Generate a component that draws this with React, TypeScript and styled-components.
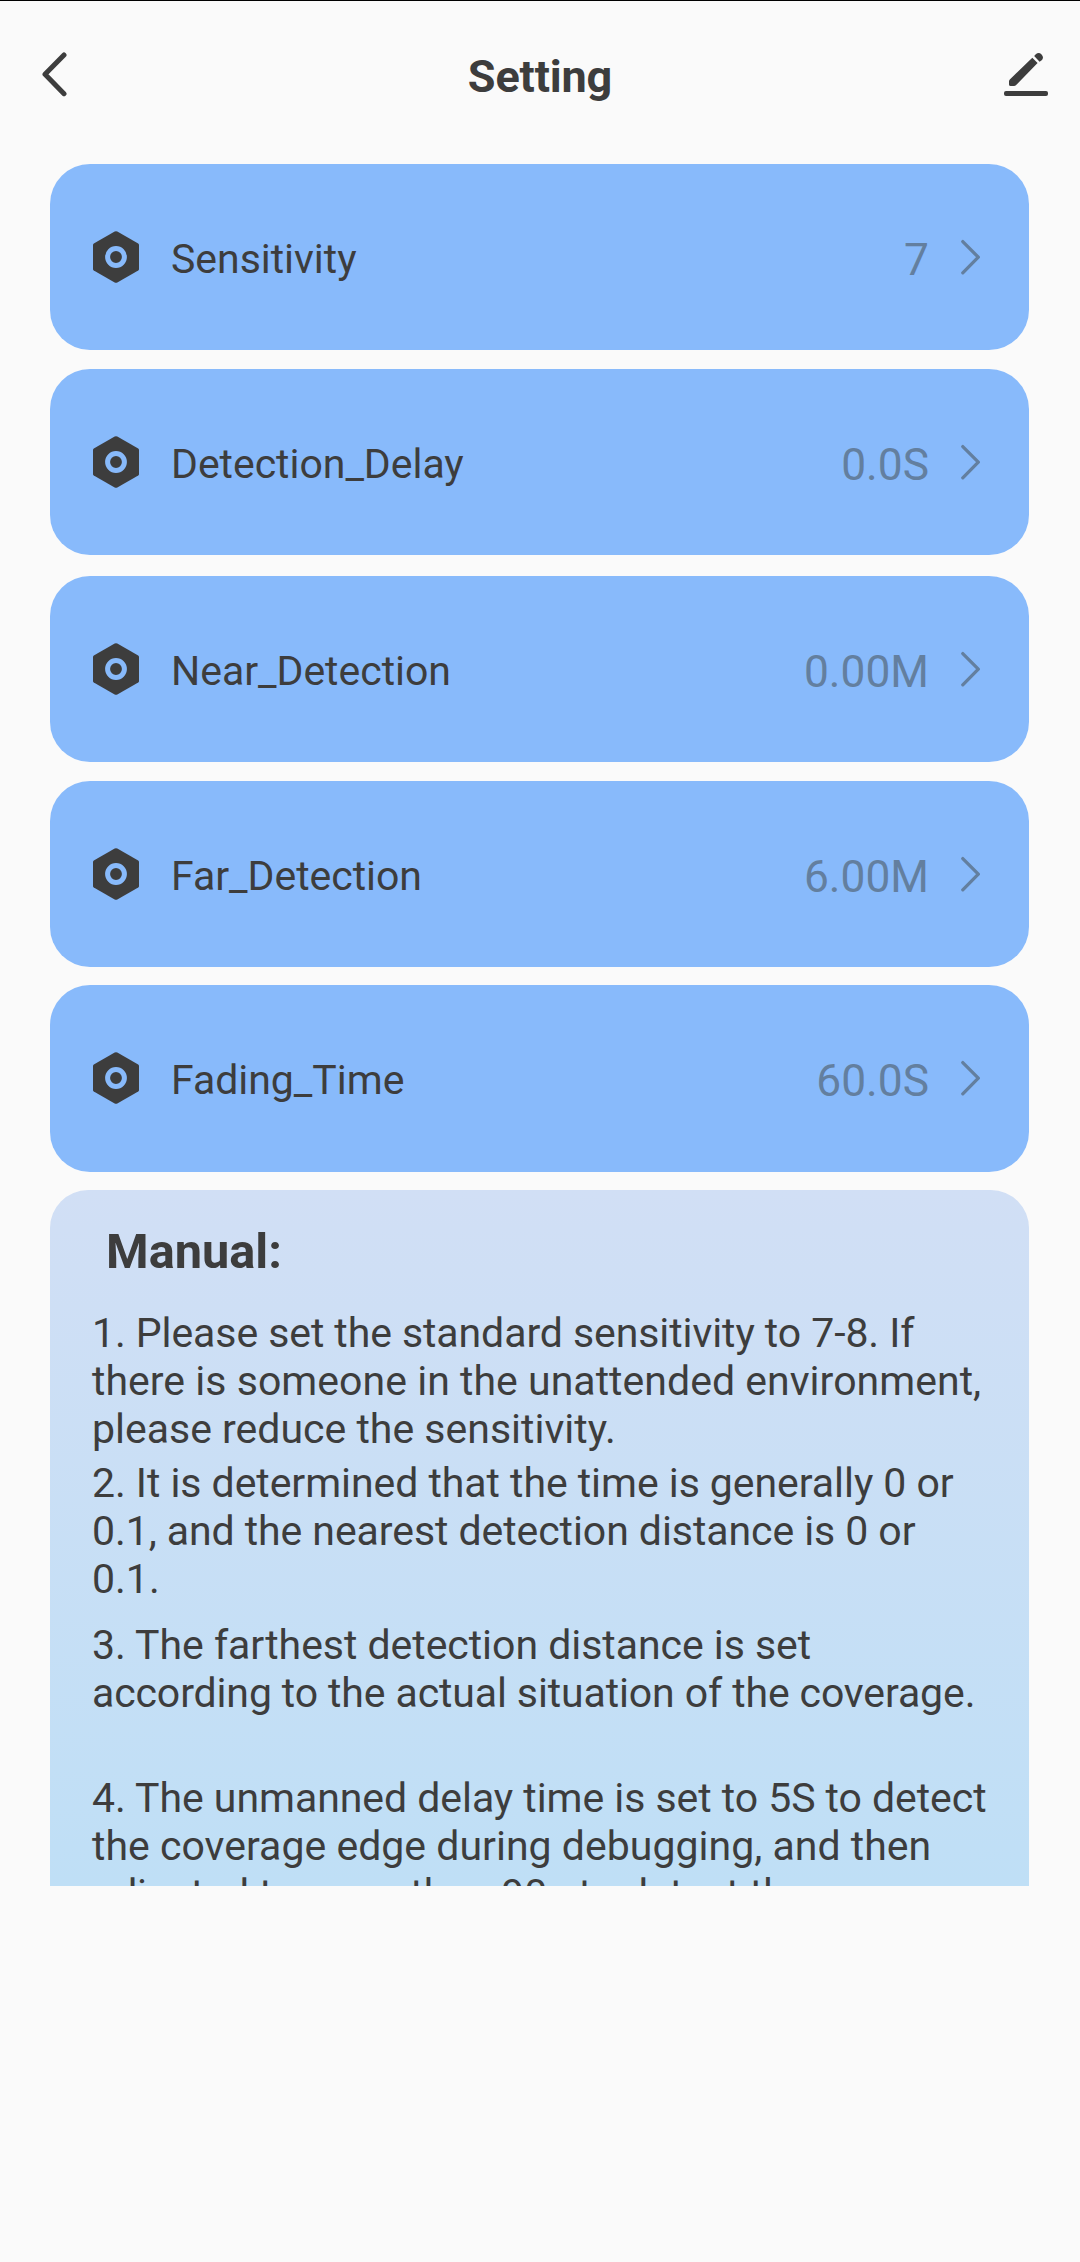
import React from "react";
import styled, { createGlobalStyle } from "styled-components";

const INK = "#3d3d3d";

const GlobalStyle = createGlobalStyle`
  * { box-sizing: border-box; }
  body { margin: 0; background: #fafafa; }
`;

const Screen = styled.div`
  width: 1080px;
  height: 2262px;
  display: flex;
  flex-direction: column;
  overflow: hidden;
  border-top: 1px solid #000;
  background: #fafafa;
  color: ${INK};
  font-family: Roboto, "Liberation Sans", sans-serif;
`;

const Header = styled.header`
  height: 163px;
  flex: none;
  display: grid;
  grid-template-columns: 108px 1fr 108px;
  align-items: start;
`;

const IconButton = styled.button<{ $end?: boolean }>`
  height: 146px;
  padding: ${(p) => (p.$end ? "0 32px 0 0" : "0 0 0 42px")};
  border: 0;
  background: none;
  color: inherit;
  display: flex;
  align-items: center;
  justify-content: ${(p) => (p.$end ? "flex-end" : "flex-start")};
`;

const Title = styled.h1`
  margin: 0;
  height: 151px;
  font-size: 45px;
  line-height: 151px;
  letter-spacing: -0.15px;
  font-weight: 700;
  text-align: center;
`;

const Content = styled.main`
  height: 1722px;
  flex: none;
  overflow: hidden;
  padding: 0 51px 0 50px;
`;

const Row = styled.div<{ $gap: number; $height: number }>`
  height: ${(p) => p.$height}px;
  margin-bottom: ${(p) => p.$gap}px;
  padding: 0 49px ${(p) => p.$height - 186}px 43px;
  border-radius: 40px;
  background: #88bafb;
  display: flex;
  align-items: center;
`;

const Label = styled.span`
  flex: 1;
  margin-left: 32px;
  padding-top: 3px;
  font-size: 41px;
  line-height: 48px;
  letter-spacing: -0.03px;
`;

const Value = styled.span`
  margin-right: 32px;
  padding-top: 5px;
  font-size: 44.3px;
  line-height: 52px;
  color: #637f9f;
`;

const Manual = styled.section`
  height: 780px;
  padding: 33px 0 0 42px;
  border-radius: 38px 38px 0 0;
  background: linear-gradient(#d1dff5 0, #bfdff6 696px);
`;

const ManualTitle = styled.h2`
  margin: 0 0 29px 14px;
  font-size: 48.7px;
  line-height: 57px;
  font-weight: 700;
`;

const Step = styled.p<{ $gap: number }>`
  margin: 0 0 ${(p) => p.$gap}px;
  font-size: 41px;
  line-height: 48px;
`;

const Line = styled.span<{ $tracking: number }>`
  display: block;
  white-space: nowrap;
  letter-spacing: ${(p) => p.$tracking}px;
`;

const BackIcon = () => (
  <svg width="25" height="45" viewBox="0 0 25 45" fill="none" stroke="currentColor" strokeWidth="5" strokeLinecap="round" strokeLinejoin="round">
    <path d="M22 3 3 22.3 22 41.7" />
  </svg>
);

const EditIcon = () => (
  <svg width="44" height="44" viewBox="0 0 44 44" fill="currentColor">
    <path d="M28.3 5.8 33.6 11.1 12.2 32.9Q11.2 34 10 34H6.7Q5 34 5 32.4V29.3Q5 28.2 5.8 27.4Z" />
    <path d="M30.2 4 32 2A4.3 4.3 0 0 1 38 8L35.6 9.8Z" />
    <rect x="0" y="39" width="44" height="5" rx="2" />
  </svg>
);

const HexIcon = () => (
  <svg width="46" height="52" viewBox="0 0 46 52">
    <path d="M21.7.6Q23 0 24.3.6L45.2 12.4Q46 13 46 14V38Q46 39 45.2 39.5L24.3 51.4Q23 52 21.7 51.4L.8 39.5Q0 39 0 38V14Q0 13 .8 12.4Z" fill={INK} />
    <circle cx="23" cy="26" r="8.4" fill="none" stroke="#88bafb" strokeWidth="5" />
  </svg>
);

const NextIcon = () => (
  <svg width="19" height="36" viewBox="0 0 19 36" fill="none" stroke="#637f9f" strokeWidth="3.3" strokeLinecap="round" strokeLinejoin="round">
    <path d="M1.8 2.6 17.3 18.2 1.8 33.8" />
  </svg>
);

const settings = [
  { label: "Sensitivity", value: "7", gap: 19, height: 186 },
  { label: "Detection_Delay", value: "0.0S", gap: 21, height: 186 },
  { label: "Near_Detection", value: "0.00M", gap: 19, height: 186 },
  { label: "Far_Detection", value: "6.00M", gap: 18, height: 186 },
  { label: "Fading_Time", value: "60.0S", gap: 18, height: 187 },
];

const steps = [
  {
    gap: 6,
    lines: [
      { text: "1. Please set the standard sensitivity to 7-8. If", tracking: -0.08 },
      { text: "there is someone in the unattended environment,", tracking: 0.03 },
      { text: "please reduce the sensitivity.", tracking: 0 },
    ],
  },
  {
    gap: 18,
    lines: [
      { text: "2. It is determined that the time is generally 0 or", tracking: -0.055 },
      { text: "0.1, and the nearest detection distance is 0 or", tracking: -0.07 },
      { text: "0.1.", tracking: 0 },
    ],
  },
  {
    gap: 57,
    lines: [
      { text: "3. The farthest detection distance is set", tracking: -0.04 },
      { text: "according to the actual situation of the coverage.", tracking: -0.12 },
    ],
  },
  {
    gap: 0,
    lines: [
      { text: "4. The unmanned delay time is set to 5S to detect", tracking: -0.05 },
      { text: "the coverage edge during debugging, and then", tracking: 0.02 },
      { text: "adjusted to more than 90s to detect the", tracking: -0.03 },
    ],
  },
];

export default function App() {
  return (
    <>
      <GlobalStyle />
      <Screen>
        <Header>
          <IconButton aria-label="Back"><BackIcon /></IconButton>
          <Title>Setting</Title>
          <IconButton $end aria-label="Edit"><EditIcon /></IconButton>
        </Header>
        <Content>
          {settings.map((s) => (
            <Row key={s.label} $gap={s.gap} $height={s.height}>
              <HexIcon />
              <Label>{s.label}</Label>
              <Value>{s.value}</Value>
              <NextIcon />
            </Row>
          ))}
          <Manual>
            <ManualTitle>Manual:</ManualTitle>
            {steps.map((s) => (
              <Step key={s.lines[0].text} $gap={s.gap}>
                {s.lines.map((l) => (
                  <Line key={l.text} $tracking={l.tracking}>{l.text}</Line>
                ))}
              </Step>
            ))}
          </Manual>
        </Content>
      </Screen>
    </>
  );
}
